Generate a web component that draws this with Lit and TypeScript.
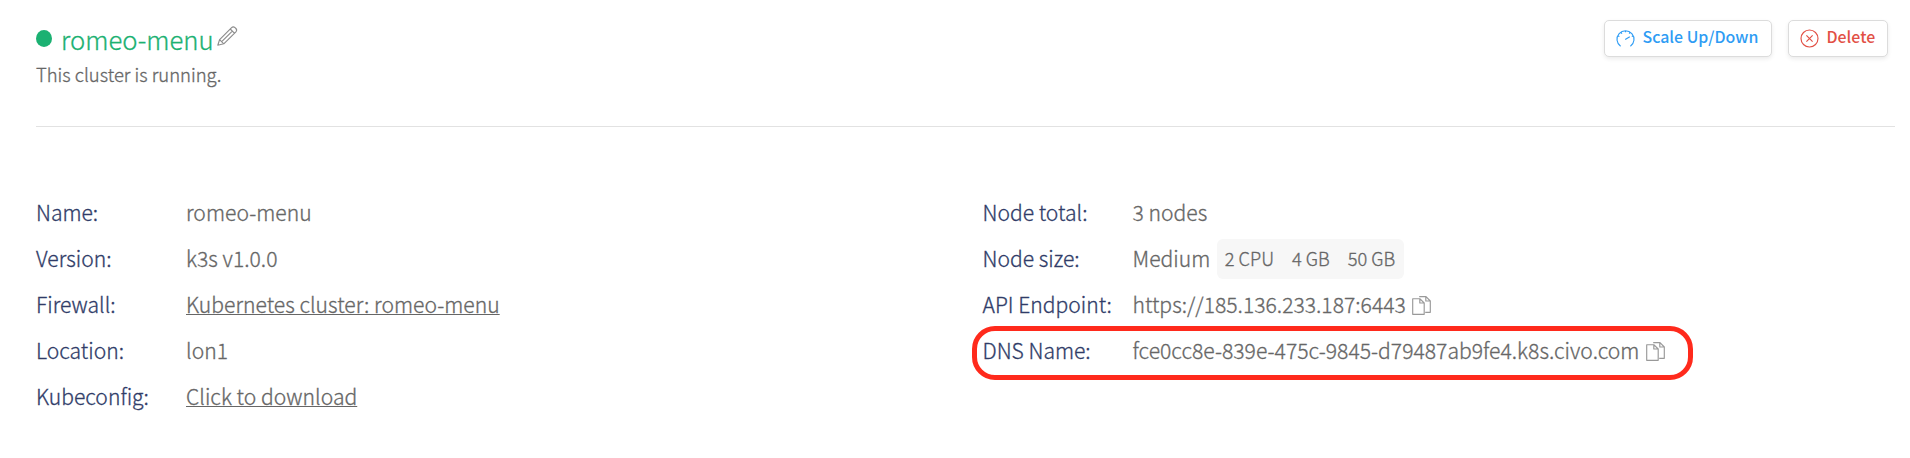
import { LitElement, html, css, svg, nothing } from "lit";
import { customElement, property } from "lit/decorators.js";

type IconName = "pencil" | "gauge" | "cross" | "copy";

const shapes = {
  pencil: svg`<path d="M.8 19.2 2.6 13.6 14.6 1.6Q16.2.1 18 1.6L18.9 2.5Q20.4 4.2 18.9 5.8L6.8 17.8Z M2.6 13.6 6.8 17.8 M13.2 3 17.4 7.2 M4.7 15.7 15.3 5.1"/>`,
  gauge: svg`<path d="M4.6 17.2A8.5 8.5 0 1 1 14.4 17.2 M9.2 10.4 13.8 7.8 M9.5 1.5V3.2 M5 3.3 5.9 4.7 M1.9 6.9 3.4 7.6 M14 3.3 13.2 4.6 M17.1 6.9 15.8 7.5"/>`,
  cross: svg`<circle cx="9.5" cy="9.5" r="8.5"/><path d="M6.4 6.4 12.6 12.6 M12.6 6.4 6.4 12.6"/>`,
  copy: svg`<path d="M.7 2.7H7.8L12.2 7V18.3H.7Z M7.8 2.7V7H12.2 M7.2 .6H14L18.3 5V16.3H13.2 M13.8 .8V5H18.2"/>`,
};

@customElement("line-icon")
class LineIcon extends LitElement {
  @property() name: IconName = "copy";

  static styles = css`
    :host { display: block; flex: none; width: 19px; height: 19px; }
    .icon { display: block; width: 100%; height: 100%; overflow: visible; fill: none; stroke: currentColor; stroke-width: 1.15; stroke-linejoin: round; }
  `;

  render() {
    const box = this.name === "pencil" ? "0 0 20 20" : "0 0 19 19";
    return html`<svg class="icon" viewBox=${box} aria-hidden="true">${shapes[this.name]}</svg>`;
  }
}

interface Detail {
  label: string;
  value: string;
  link?: boolean;
  copy?: boolean;
  marked?: boolean;
  specs?: string[];
}

const left: Detail[] = [
  { label: "Name:", value: "romeo-menu" },
  { label: "Version:", value: "k3s v1.0.0" },
  { label: "Firewall:", value: "Kubernetes cluster: romeo-menu", link: true },
  { label: "Location:", value: "lon1" },
  { label: "Kubeconfig:", value: "Click to download", link: true },
];

const right: Detail[] = [
  { label: "Node total:", value: "3 nodes" },
  { label: "Node size:", value: "Medium", specs: ["2 CPU", "4 GB", "50 GB"] },
  { label: "API Endpoint:", value: "https://185.136.233.187:6443", copy: true },
  { label: "DNS Name:", value: "fce0cc8e-839e-475c-9845-d79487ab9fe4.k8s.civo.com", copy: true, marked: true },
];

@customElement("app-root")
class AppRoot extends LitElement {
  static styles = css`
    :host { display: block; height: 458px; overflow: hidden; background: #fff; color: #666; font-family: "Noto Sans CJK SC", sans-serif; font-weight: 300; -webkit-text-stroke: 0.3px currentColor; }
    * { box-sizing: border-box; }
    .header { display: flex; justify-content: space-between; height: 127px; margin: 0 15px 0 36px; padding-right: 7px; border-bottom: 1px solid #e2e2e2; }
    .heading { padding-top: 19px; }
    .title { display: flex; align-items: flex-start; height: 40px; color: #1bb172; }
    .status { width: 16px; height: 17px; margin: 11px 9px 0 0; border-radius: 50%; background: #1bb172; }
    .name { margin: 0; font-size: 25.7px; font-weight: 300; line-height: 40px; }
    .edit { width: 20px; height: 20px; margin: 7px 0 0 3px; color: #8d8d8d; }
    .state { margin: 0; font-size: 18.45px; line-height: 30px; }
    .actions { display: flex; gap: 16px; padding-top: 20px; }
    .button { display: flex; align-items: center; height: 37px; padding: 0 12px 4px 10.5px; border: 1px solid #dcdcdc; border-radius: 5px; background: #fff; box-shadow: 0 2px 4px rgba(0, 0, 0, 0.08); font: 500 15.9px/24px "Noto Sans CJK SC", sans-serif; -webkit-text-stroke: 0; white-space: nowrap; gap: 8px; }
    .glyph { margin-top: 3px; }
    .scale { width: 168px; color: #2e9cf4; }
    .delete { width: 100px; color: #e25045; }
    .details { display: grid; grid-template-columns: 946.5px 1fr; padding: 63px 0 0 36px; }
    .list { margin: 0; }
    .row { position: relative; display: grid; grid-template-columns: 150px 1fr; align-items: center; height: 46px; padding-bottom: 2px; font-size: 21.1px; line-height: 44px; white-space: nowrap; }
    .label { color: #303c68; }
    .value { display: flex; align-items: center; margin: 0; letter-spacing: 0.025px; }
    .link { color: inherit; text-decoration: underline; text-decoration-thickness: 1px; text-underline-offset: 1px; text-decoration-skip-ink: none; }
    .specs { display: flex; gap: 18px; height: 40px; margin: 2px 0 0 6.5px; padding: 0 9px 0 8px; border-radius: 6px; background: #f7f7f7; font-size: 18.2px; line-height: 38px; }
    .copy { margin: 2px 0 0 6.5px; color: #999; }
    .marker { position: absolute; left: -10.5px; top: -2px; width: 721px; height: 54px; border: 5px solid #ff2a1c; border-radius: 23px; pointer-events: none; }
  `;

  private detail(item: Detail) {
    return html`<div class="row">
      <dt class="label">${item.label}</dt>
      <dd class="value">
        ${item.link ? html`<a class="link">${item.value}</a>` : html`<span>${item.value}</span>`}
        ${item.specs ? html`<span class="specs">${item.specs.map((s) => html`<span>${s}</span>`)}</span>` : nothing}
        ${item.copy ? html`<line-icon class="copy" name="copy"></line-icon>` : nothing}
      </dd>
      ${item.marked ? html`<span class="marker"></span>` : nothing}
    </div>`;
  }

  render() {
    return html`
      <header class="header">
        <div class="heading">
          <div class="title">
            <span class="status"></span>
            <h1 class="name">romeo-menu</h1>
            <line-icon class="edit" name="pencil"></line-icon>
          </div>
          <p class="state">This cluster is running.</p>
        </div>
        <div class="actions">
          <button class="button scale"><line-icon class="glyph" name="gauge"></line-icon>Scale Up/Down</button>
          <button class="button delete"><line-icon class="glyph" name="cross"></line-icon>Delete</button>
        </div>
      </header>
      <main class="details">
        <dl class="list">${left.map((item) => this.detail(item))}</dl>
        <dl class="list">${right.map((item) => this.detail(item))}</dl>
      </main>
    `;
  }
}
